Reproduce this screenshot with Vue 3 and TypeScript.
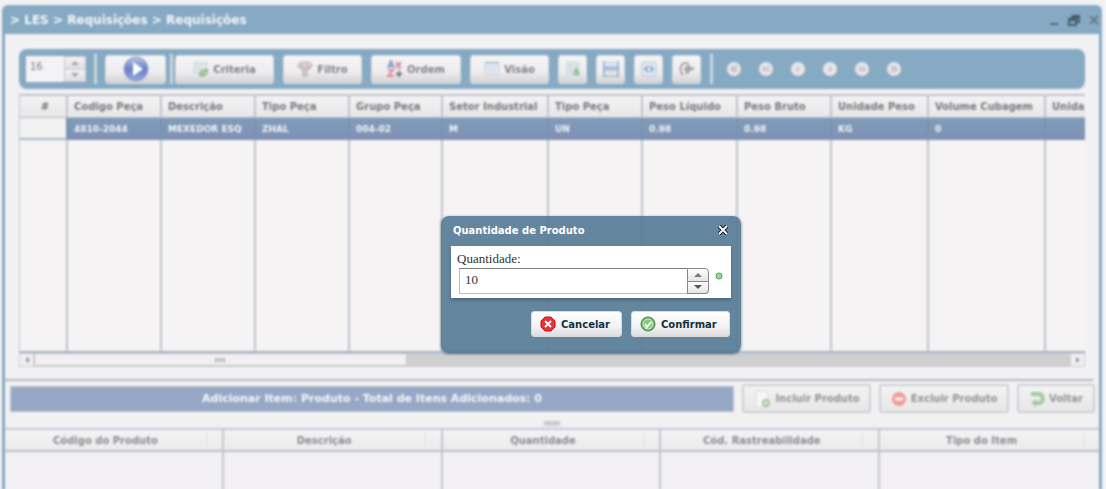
<script setup lang="ts">
import { ref } from 'vue'

const pageSize = ref('16')
const quantity = ref('10')

interface Column {
  label: string
  value: string
  width: number
}

const columns: Column[] = [
  { label: 'Codigo Peça', value: '4810-2044', width: 94 },
  { label: 'Descrição', value: 'MEXEDOR ESQ', width: 94 },
  { label: 'Tipo Peça', value: 'ZHAL', width: 94 },
  { label: 'Grupo Peça', value: '004-02', width: 93 },
  { label: 'Setor Industrial', value: 'M', width: 106 },
  { label: 'Tipo Peça', value: 'UN', width: 94 },
  { label: 'Peso Líquido', value: '0.98', width: 95 },
  { label: 'Peso Bruto', value: '0.98', width: 94 },
  { label: 'Unidade Peso', value: 'KG', width: 97 },
  { label: 'Volume Cubagem', value: '0', width: 117 },
  { label: 'Unida', value: '', width: 120 },
]

const itemColumns = ['Código do Produto', 'Descrição', 'Quantidade', 'Cód. Rastreabilidade', 'Tipo do Item']

const pagers = [
  { name: 'Primeiro', path: 'M7 4L4 7l3 3M10 4L7 7l3 3' },
  { name: 'Retroceder', path: 'M6.500 4.500L4 7l2.500 2.500M10 4.500L7.500 7l2.500 2.500' },
  { name: 'Anterior', path: 'M8 4.500L5.500 7L8 9.500' },
  { name: 'Próximo', path: 'M6 4.500L8.500 7L6 9.500' },
  { name: 'Avançar', path: 'M4 4.500L6.500 7L4 9.500M7.500 4.500L10 7l-2.500 2.500' },
  { name: 'Último', path: 'M4 4l3 3l-3 3M7 4l3 3l-3 3' },
]

function step(amount: number) {
  quantity.value = String(Number(quantity.value) + amount)
}
function stepPage(amount: number) {
  pageSize.value = String(Number(pageSize.value) + amount)
}
</script>

<template>
  <div class="page">
    <main class="window">
      <header class="titlebar">
        <h1>&gt; LES &gt; Requisições &gt; Requisições</h1>
        <div class="window-controls">
          <button type="button" aria-label="Minimizar">
            <svg width="12" height="12" viewBox="0 0 12 12"><path d="M2 10h8" stroke="#536a79" stroke-width="2" /></svg>
          </button>
          <button type="button" aria-label="Restaurar">
            <svg width="12" height="12" viewBox="0 0 12 12"><path d="M4 2h7v6H9M4 2v3M4 3h7M1 5h7v6H1zM1 6h7" fill="none" stroke="#465b68" stroke-width="2" /></svg>
          </button>
          <button type="button" aria-label="Fechar janela">
            <svg width="12" height="12" viewBox="0 0 12 12"><path d="M2 2l8 8M10 2l-8 8" stroke="#68798a" stroke-width="2" /></svg>
          </button>
        </div>
      </header>

      <div class="content">
        <section class="panel">
          <div class="toolbar">
            <div class="page-size">
              <input v-model="pageSize" type="text" aria-label="Registros por página" />
              <div class="spinner">
                <button type="button" aria-label="Mais registros" @click="stepPage(1)"><svg width="8" height="4" viewBox="0 0 8 4"><path d="M0 4L4 0l4 4z" fill="#a4a2a6" /></svg></button>
                <button type="button" aria-label="Menos registros" @click="stepPage(-1)"><svg width="8" height="4" viewBox="0 0 8 4"><path d="M0 0h8L4 4z" fill="#a4a2a6" /></svg></button>
              </div>
            </div>
            <span class="separator first"></span>
            <button type="button" class="btn play" aria-label="Executar">
              <svg width="26" height="26" viewBox="0 0 26 26">
                <defs>
                  <linearGradient id="play-blue" x1="0" y1="0" x2="0" y2="1">
                    <stop offset="0" stop-color="#b9c5e8" /><stop offset="0.500" stop-color="#6a80c0" /><stop offset="1" stop-color="#94a8e2" />
                  </linearGradient>
                </defs>
                <circle cx="13" cy="13" r="12" fill="url(#play-blue)" stroke="#8e9fcb" />
                <path d="M10 6l10 7l-10 7z" fill="#fff" />
              </svg>
            </button>
            <span class="separator second"></span>
            <button type="button" class="btn criteria">
              <svg width="16" height="16" viewBox="0 0 16 16"><path d="M1 1h13v11H1z" fill="#e3e8ee" stroke="#cfd8df" /><path d="M1 4h13M1 8h13M5 1v11" stroke="#cdd7dd" /><path d="M6 15c0-5 3-7 9-7c1 5-3 9-9 7z" fill="#8dba80" /><path d="M8 14l4-4M12 10v3" stroke="#d8ead2" /></svg>
              Criteria
            </button>
            <button type="button" class="btn filtro">
              <svg width="16" height="16" viewBox="0 0 16 16"><path d="M1 4c0 3 5 4 5 6v5h4v-5c0-2 5-3 5-6z" fill="#d0cdd0" stroke="#aaa4a8" /><ellipse cx="8" cy="4" rx="7" ry="3" fill="#e3dadc" stroke="#b4a7ac" /><circle cx="5" cy="4" r="1" fill="#bf8f95" /><circle cx="10" cy="4" r="1" fill="#bf8f95" /></svg>
              Filtro
            </button>
            <button type="button" class="btn ordem">
              <svg width="16" height="18" viewBox="0 0 16 18"><path d="M1 8l3-7l3 7M2 6h4" fill="none" stroke="#8499c8" stroke-width="2" /><path d="M1 10h5l-5 6h6M9 2l5 6M14 2l-5 6" fill="none" stroke="#d88f99" stroke-width="2" /><path d="M12 9v6M9 13l3 4l3-4z" stroke="#7c797d" fill="#7c797d" /></svg>
              Ordem
            </button>
            <button type="button" class="btn visao">
              <svg width="16" height="16" viewBox="0 0 16 16"><path d="M1 1h14v13H1z" fill="#e7ebf1" stroke="#c5d1e1" /><path d="M1 2h14" stroke="#b8c7e0" stroke-width="2" /><path d="M1 6h14M1 10h14M5 3v11M10 3v11" stroke="#d2dbe4" /></svg>
              Visão
            </button>
            <button type="button" class="btn square" aria-label="Exportar planilha">
              <svg width="16" height="16" viewBox="0 0 16 16"><path d="M2 1h12v13H2z" fill="#dfe7ea" stroke="#c9d6df" /><path d="M2 5h12M2 9h12M6 1v13" stroke="#cbd6dc" /><path d="M11 6l4 8H8z" fill="#7fb57b" /><circle cx="11" cy="12" r="1" fill="#eef6eb" /></svg>
            </button>
            <button type="button" class="btn square" aria-label="Salvar">
              <svg width="18" height="18" viewBox="0 0 18 18"><path d="M2 1v15h14V1" fill="#e5ebf0" stroke="#a5b6d9" stroke-width="2" /><path d="M2 7h14v3H2z" fill="#b9c7e5" stroke="#8fa5d3" /><path d="M5 12h8v4H5z" fill="#d7e3d8" /><path d="M4 3h10" stroke="#bccbe4" /></svg>
            </button>
            <button type="button" class="btn square" aria-label="Código">
              <svg width="16" height="16" viewBox="0 0 16 16"><rect x="1" y="1" width="14" height="14" rx="2" fill="#e5eaf3" stroke="#b3c1dc" /><path d="M7 5L4 8l3 3M9 5l3 3l-3 3" fill="none" stroke="#8fa3cc" stroke-width="2" /></svg>
            </button>
            <button type="button" class="btn square" aria-label="Ferramentas">
              <svg width="16" height="16" viewBox="0 0 16 16"><path d="M4 14c-4-4-3-12 3-12c3 0 3 4 0 5c-2 1-1 3 1 2l1-3M7 13l3-7l5 2h-4l-2 4" fill="none" stroke="#aaa4a4" stroke-width="2" /></svg>
            </button>
            <span class="separator last"></span>
            <nav class="pager" aria-label="Paginação">
              <button v-for="item in pagers" :key="item.name" type="button" :aria-label="item.name">
                <svg width="14" height="14" viewBox="0 0 14 14"><circle cx="7" cy="7" r="7" fill="#e6e6e8" /><path :d="item.path" fill="none" stroke="#8d9098" /></svg>
              </button>
            </nav>
          </div>

          <div class="grid-view">
            <table class="parts">
              <colgroup>
                <col class="index-column" />
                <col v-for="(column, i) in columns" :key="i" :style="{ width: column.width + 'px' }" />
              </colgroup>
              <thead>
                <tr>
                  <th scope="col" class="index">#</th>
                  <th v-for="(column, i) in columns" :key="i" scope="col">{{ column.label }}</th>
                </tr>
              </thead>
              <tbody>
                <tr class="selected">
                  <td class="index"></td>
                  <td v-for="(column, i) in columns" :key="i">{{ column.value }}</td>
                </tr>
                <tr class="blank">
                  <td></td>
                  <td v-for="(column, i) in columns" :key="i"></td>
                </tr>
              </tbody>
            </table>
          </div>
          <div class="scrollbar">
            <button type="button" aria-label="Rolar para a esquerda"><svg width="4" height="6" viewBox="0 0 4 6"><path d="M4 0v6L0 3z" fill="#97989d" /></svg></button>
            <div class="track"><div class="thumb"><span></span></div></div>
            <button type="button" aria-label="Rolar para a direita"><svg width="4" height="6" viewBox="0 0 4 6"><path d="M0 0v6l4-3z" fill="#97989d" /></svg></button>
          </div>
        </section>

        <section class="actions">
          <h2>Adicionar Item: Produto - Total de Itens Adicionados: 0</h2>
          <button type="button" class="btn incluir">
            <svg width="18" height="18" viewBox="0 0 18 18"><path d="M3 1h8l4 4v12H3z" fill="#f7f7f7" stroke="#dadbdd" /><circle cx="13" cy="13" r="4" fill="#a2c898" /><path d="M13 11v4M11 13h4" stroke="#f5fbf3" /></svg>
            Incluir Produto
          </button>
          <button type="button" class="btn excluir">
            <svg width="16" height="16" viewBox="0 0 16 16"><circle cx="8" cy="8" r="7" fill="#ee9c96" /><path d="M4 8h8" stroke="#fff2f0" stroke-width="3" /></svg>
            Excluir Produto
          </button>
          <button type="button" class="btn voltar">
            <svg width="16" height="16" viewBox="0 0 16 16"><path d="M2 3h8c5 0 5 9 0 9H6" fill="none" stroke="#a0cca2" stroke-width="4" /><path d="M7 8v8l-5-4z" fill="#a0cca2" /></svg>
            Voltar
          </button>
        </section>
        <div class="divider"><span></span></div>
        <table class="items">
          <thead>
            <tr>
              <th v-for="name in itemColumns" :key="name" scope="col"><div><span>{{ name }}</span><i></i></div></th>
            </tr>
          </thead>
          <tbody>
            <tr><td v-for="name in itemColumns" :key="name"></td></tr>
          </tbody>
        </table>
      </div>
    </main>

    <form class="dialog" role="dialog" aria-labelledby="dialog-title" @submit.prevent>
      <header>
        <h2 id="dialog-title">Quantidade de Produto</h2>
        <button type="button" class="close" aria-label="Fechar">
          <svg width="10" height="10" viewBox="0 0 10 10"><path d="M1 1l8 8M9 1L1 9" stroke="#101c24" stroke-width="4" /><path d="M1 1l8 8M9 1L1 9" stroke="#f4f8fa" stroke-width="2" /></svg>
        </button>
      </header>
      <div class="fields">
        <label for="quantity">Quantidade:</label>
        <div class="field-row">
          <div class="quantity">
            <input id="quantity" v-model="quantity" type="text" />
            <div class="spinner">
              <button type="button" aria-label="Aumentar" @click="step(1)"><svg width="8" height="4" viewBox="0 0 8 4"><path d="M0 4L4 0l4 4z" fill="#77777b" /></svg></button>
              <button type="button" aria-label="Diminuir" @click="step(-1)"><svg width="8" height="4" viewBox="0 0 8 4"><path d="M0 0h8L4 4z" fill="#55555a" /></svg></button>
            </div>
          </div>
          <svg class="status" width="8" height="8" viewBox="0 0 8 8"><circle cx="4" cy="4" r="3" fill="#9bd89a" stroke="#4fa457" /></svg>
        </div>
      </div>
      <footer>
        <button type="button" class="cancelar">
          <svg width="16" height="16" viewBox="0 0 16 16"><path d="M5 1h6l4 4v6l-4 4H5l-4-4V5z" fill="#f02e2e" stroke="#c41622" /><path d="M5 5l6 6M11 5l-6 6" stroke="#fff" stroke-width="2" /></svg>
          Cancelar
        </button>
        <button type="submit" class="confirmar">
          <svg width="16" height="16" viewBox="0 0 16 16"><circle cx="8" cy="8" r="7" fill="#62b45c" stroke="#428c46" /><circle cx="8" cy="8" r="5" fill="#84c67b" stroke="#d5efd0" /><path d="M5 8l2 3l4-5" fill="none" stroke="#fff" stroke-width="2" /></svg>
          Confirmar
        </button>
      </footer>
    </form>
  </div>
</template>

<style>
body {
  margin: 0;
  background: #f3f2f4;
}
</style>

<style scoped>
* {
  box-sizing: border-box;
}
.page {
  position: relative;
  display: flex;
  min-height: 100vh;
  overflow: hidden;
  padding: 5px 4px 0 2px;
  font-family: Verdana, 'DejaVu Sans', sans-serif;
  font-size: 10px;
}
h1,
h2 {
  margin: 0;
}
button {
  display: flex;
  align-items: center;
  justify-content: center;
  margin: 0;
  padding: 0;
  border: 0;
  background: none;
  font: inherit;
  cursor: pointer;
}
input {
  min-width: 0;
  margin: 0;
  border: 0;
  outline: 0;
}
svg {
  display: block;
  flex: none;
}
.window {
  flex: 1;
  min-width: 0;
  display: flex;
  flex-direction: column;
  border-radius: 6px 6px 0 0;
  background: #86aac3;
  filter: blur(1px);
}
.titlebar {
  display: flex;
  align-items: center;
  justify-content: space-between;
  height: 29px;
  padding: 0 2px 0 8px;
}
.titlebar h1 {
  color: #f6f8fa;
  font-size: 12px;
}
.window-controls {
  display: flex;
  gap: 8px;
}
.content {
  flex: 1;
  display: flex;
  flex-direction: column;
  margin: 0 3px;
  background: #f1f0f2;
}
.panel {
  padding: 15px 8px 12px 14px;
  margin: 0 6px 0 0;
  border-bottom: 2px solid #b8b9bd;
}
.toolbar {
  display: flex;
  align-items: center;
  height: 40px;
  padding: 0 7px;
  border-radius: 8px;
  background: #86aac3;
}
.page-size {
  display: flex;
  width: 60px;
  height: 26px;
  background: #f3f2f4;
}
.page-size input {
  flex: 1;
  padding: 0 0 6px 4px;
  background: none;
  color: #7c7c80;
  font: 10px 'DejaVu Sans', sans-serif;
}
.spinner {
  display: flex;
  flex-direction: column;
  width: 22px;
}
.spinner button {
  flex: 1;
  border: 1px solid #c9c9cd;
  background: linear-gradient(#f4f3f5, #dededf);
}
.spinner button + button {
  border-top: 0;
}
.separator {
  width: 3px;
  height: 30px;
  background: #c9d7df;
}
.separator.first {
  margin: 0 8px;
}
.separator.second {
  margin: 0 2px 0 4px;
}
.separator.last {
  margin: 0 14px 0 9px;
}
.btn {
  gap: 4px;
  height: 29px;
  border: 1px solid #d8dade;
  border-radius: 3px;
  background: linear-gradient(#f6f5f6, #eeecee 60%, #d2d1d4);
  color: #808187;
  font-weight: bold;
  white-space: nowrap;
}
.toolbar .btn + .btn {
  margin-left: 9px;
}
.play {
  width: 61px;
}
.criteria {
  width: 99px;
}
.filtro,
.visao {
  width: 79px;
}
.ordem {
  width: 90px;
}
.square {
  width: 29px;
}
.pager {
  display: flex;
  gap: 18px;
}
.grid-view {
  overflow: hidden;
  margin-top: 5px;
  border-bottom: 2px solid #a5b3c6;
}
table {
  border-collapse: separate;
  border-spacing: 0;
  table-layout: fixed;
}
.parts {
  width: 1146px;
}
.index-column {
  width: 49px;
}
.parts th,
.parts td {
  padding: 0 6px;
  border-right: 2px solid #c0c4cc;
  text-align: left;
  white-space: nowrap;
}
.parts th:first-child,
.parts td:first-child {
  border-left: 1px solid #c2c9d3;
}
.parts th {
  height: 24px;
  border-top: 2px solid #c0c4cc;
  border-bottom: 1px solid #b0b9c5;
  background: linear-gradient(#f4f3f4, #e7e6e8);
  color: #77787c;
}
.parts th.index {
  padding-left: 10px;
  text-align: center;
}
.selected td {
  height: 22px;
  border-right-color: #7a91b2;
  background: linear-gradient(#7f9dba, #8090b4);
  color: #f3f5f8;
  font-size: 9px;
  font-weight: bold;
}
.parts .selected td.index {
  background: #f3f2f2;
  border-bottom: 2px solid #a4b7cc;
}
.blank td {
  height: 211px;
  background: #f5f3f4;
}
.scrollbar {
  display: flex;
  height: 14px;
  background: #cfcfd0;
}
.scrollbar button {
  width: 15px;
  border: 1px solid #d1d2d4;
  background: #efeeef;
}
.track {
  flex: 1;
}
.thumb {
  display: flex;
  align-items: center;
  justify-content: center;
  width: 36%;
  height: 13px;
  border: 1px solid #c4c5c9;
  background: #f1eff1;
}
.thumb span {
  width: 10px;
  height: 4px;
  background: repeating-linear-gradient(90deg, #adafb3 0 2px, #dddcde 2px 4px);
}
.actions {
  display: flex;
  align-items: center;
  gap: 8px;
  padding: 3px 4px 0 5px;
}
.actions h2 {
  flex: 1;
  height: 26px;
  border: 1px solid #bfc7d3;
  background: #96a8c5;
  color: #f6f8fa;
  font-size: 11px;
  line-height: 24px;
  text-align: center;
}
.actions .btn {
  border: 2px solid #cfcfd2;
  background: linear-gradient(#f4f3f4, #e8e7e8);
  color: #8f9297;
}
.incluir {
  width: 129px;
}
.excluir {
  width: 130px;
}
.voltar {
  width: 78px;
}
.divider {
  display: flex;
  align-items: flex-end;
  justify-content: center;
  height: 15px;
  padding-bottom: 2px;
}
.divider span {
  width: 16px;
  height: 5px;
  background: #cbcccd;
}
.items {
  flex: 1;
  display: flex;
  flex-direction: column;
  width: 100%;
}
.items thead {
  display: block;
}
.items tbody {
  flex: 1;
  display: grid;
}
.items tr {
  display: grid;
  grid-template-columns: repeat(5, 1fr);
}
.items th,
.items td {
  padding: 0;
  border-right: 2px solid #c2c6cd;
}
.items th:last-child,
.items td:last-child {
  border-right: 0;
}
.items th {
  height: 24px;
  border-top: 2px solid #c2c9d7;
  border-bottom: 2px solid #bac1ca;
  background: linear-gradient(#f4f3f4, #ebeaec);
  color: #898c91;
}
.items th div {
  display: flex;
  align-items: center;
  height: 20px;
}
.items th span {
  flex: 1;
}
.items th i {
  width: 16px;
  height: 14px;
  border-left: 1px solid #dddde0;
}
.items td {
  height: 38px;
  background: #f3f1f3;
}

.dialog {
  position: absolute;
  top: 216px;
  left: 441px;
  width: 300px;
  padding: 0 10px 16px;
  border-radius: 8px;
  background: rgba(84, 121, 149, 0.9);
  box-shadow: 0 1px 3px #5d6870;
}
.dialog header {
  display: flex;
  align-items: center;
  justify-content: space-between;
  height: 30px;
  padding: 0 3px 2px 2px;
}
.dialog h2 {
  color: #fff;
  font-size: 10px;
}
.fields {
  height: 52px;
  padding: 6px 8px 4px;
  background: #fff;
  box-shadow: 0 2px 3px #48677e;
  color: #333;
  font-family: 'Liberation Serif', serif;
}
.fields label {
  display: block;
  margin-left: -2px;
  height: 16px;
  font-size: 13px;
  line-height: 14px;
}
.field-row {
  display: flex;
  align-items: flex-start;
  gap: 6px;
}
.quantity {
  flex: 1;
  display: flex;
  height: 26px;
}
.quantity input {
  flex: 1;
  padding: 0 5px 3px;
  border: 1px solid #b8bcbc;
  border-top-color: #777c80;
  border-right: 0;
  background: #fff;
  color: #333;
  font: 13px 'Liberation Serif', serif;
}
.quantity .spinner button {
  border-color: #85878a;
  background: linear-gradient(#fff, #e5e4e6);
}
.quantity .spinner button:first-child {
  border-radius: 0 4px 0 0;
}
.quantity .spinner button:last-child {
  border-radius: 0 0 4px 0;
}
.status {
  margin-top: 4px;
}
.dialog footer {
  display: flex;
  justify-content: flex-end;
  gap: 9px;
  padding: 13px 1px 0;
}
.dialog footer button {
  justify-content: flex-start;
  gap: 5px;
  height: 26px;
  padding: 0 8px;
  border: 1px solid #d6dadc;
  border-radius: 3px;
  background: linear-gradient(#fff, #f4f2f4 60%, #dddcdf);
  color: #12313d;
  font-weight: bold;
}
.cancelar {
  width: 91px;
}
.confirmar {
  width: 99px;
}
</style>
